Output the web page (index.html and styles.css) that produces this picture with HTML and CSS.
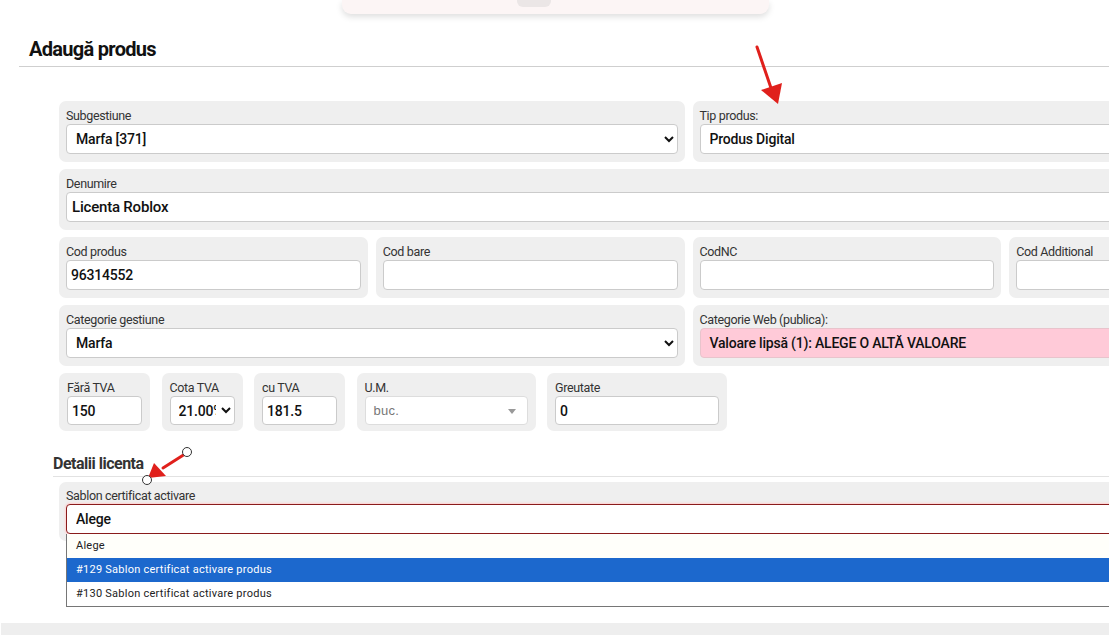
FILE: index.html
```html
<!DOCTYPE html>
<html lang="ro">
<head>
    <meta charset="UTF-8">
    <meta name="viewport" content="width=device-width, initial-scale=1.0">
    <title>Adaugă produs</title>
    <link rel="stylesheet" href="styles.css">
</head>
<body>

<div class="top-menu"><span class="top-tab"></span></div>

<div class="page">
    <h1 class="page-title">Adaugă produs</h1>

    <div class="form">
        <div class="row cols-2">
            <div class="form-group">
                <label for="subgestiune">Subgestiune</label>
                <select id="subgestiune"><option>Marfa [371]</option></select>
            </div>
            <div class="form-group">
                <label for="tip">Tip produs:</label>
                <select id="tip" class="no-arrow"><option>Produs Digital</option></select>
            </div>
        </div>

        <div class="row">
            <div class="form-group">
                <label for="denumire">Denumire</label>
                <input type="text" id="denumire" class="big" value="Licenta Roblox">
            </div>
        </div>

        <div class="row cols-4">
            <div class="form-group">
                <label for="cod">Cod produs</label>
                <input type="text" id="cod" value="96314552">
            </div>
            <div class="form-group">
                <label for="codbare">Cod bare</label>
                <input type="text" id="codbare">
            </div>
            <div class="form-group">
                <label for="codnc">CodNC</label>
                <input type="text" id="codnc">
            </div>
            <div class="form-group">
                <label for="codadd">Cod Additional</label>
                <input type="text" id="codadd">
            </div>
        </div>

        <div class="row cols-2">
            <div class="form-group">
                <label for="catgest">Categorie gestiune</label>
                <select id="catgest"><option>Marfa</option></select>
            </div>
            <div class="form-group">
                <label>Categorie Web (publica):</label>
                <div class="missing-value">Valoare lipsă (1): ALEGE O ALTĂ VALOARE</div>
            </div>
        </div>

        <div class="row small-row">
            <div class="form-group w-91">
                <label for="faratva">Fără TVA</label>
                <input type="text" id="faratva" value="150">
            </div>
            <div class="form-group w-81">
                <label for="cota">Cota TVA</label>
                <select id="cota"><option>21.00%</option></select>
            </div>
            <div class="form-group w-91">
                <label for="cutva">cu TVA</label>
                <input type="text" id="cutva" value="181.5">
            </div>
            <div class="form-group w-179">
                <label>U.M.</label>
                <div class="select2">buc.<span class="caret"></span></div>
            </div>
            <div class="form-group w-180">
                <label for="greutate">Greutate</label>
                <input type="text" id="greutate" value="0">
            </div>
        </div>
    </div>

    <h2 class="section-title">Detalii licenta</h2>

    <div class="form">
        <div class="row">
            <div class="form-group">
                <label for="sablon">Sablon certificat activare</label>
                <div class="select-wrap">
                    <select id="sablon" class="invalid no-arrow"><option>Alege</option></select>
                    <ul class="dropdown">
                        <li>Alege</li>
                        <li class="active">#129 Sablon certificat activare produs</li>
                        <li>#130 Sablon certificat activare produs</li>
                    </ul>
                </div>
            </div>
        </div>
    </div>
</div>

<div class="footer-strip"></div>

<svg class="annotations" width="1109" height="635" viewBox="0 0 1109 635">
    <line x1="757" y1="47" x2="771" y2="88" stroke="#e0201c" stroke-width="3" stroke-linecap="round"/>
    <polygon points="778,104 761,90 782,83" fill="#e0201c"/>
    <line x1="185" y1="454" x2="163" y2="468" stroke="#e0201c" stroke-width="3" stroke-linecap="round"/>
    <polygon points="148,478 154,463 166,476" fill="#e0201c"/>
    <circle cx="187" cy="452" r="4.5" fill="#fff" stroke="#333" stroke-width="1"/>
    <circle cx="147" cy="480" r="4.5" fill="#fff" stroke="#333" stroke-width="1"/>
</svg>

</body>
</html>
```

FILE: styles.css
```css
html, body {
    margin: 0;
    padding: 0;
    overflow: hidden;
    background-color: #fff;
}
body {
    font-family: Roboto, "Liberation Sans", sans-serif;
    color: #222;
    width: 1109px;
    height: 635px;
    position: relative;
}
.top-menu {
    position: absolute;
    top: 0;
    left: 342px;
    width: 427px;
    height: 14px;
    background-color: #fcf5f5;
    border-radius: 0 0 9px 9px;
    box-shadow: 0 3px 6px rgba(0, 0, 0, 0.13);
}
.top-tab {
    position: absolute;
    left: 175px;
    top: 0;
    width: 34px;
    height: 7px;
    background-color: #ebe6e6;
    border-radius: 0 0 6px 6px;
}
.page {
    padding-top: 36px;
}
.page-title {
    margin: 0 0 0 19px;
    padding: 0 10px 4px;
    font-size: 20px;
    line-height: 26px;
    font-weight: bold;
    letter-spacing: -0.7px;
    color: #111;
    border-bottom: 1px solid #cfcfcf;
}
.form {
    margin-left: 59px;
    width: 1259px;
}
.page-title + .form {
    margin-top: 34px;
}
.row {
    display: grid;
    grid-template-columns: 1fr;
    gap: 8px;
    margin-bottom: 7px;
}
.row.cols-2 {
    grid-template-columns: 1fr 1fr;
}
.row.cols-4 {
    grid-template-columns: repeat(4, 1fr);
}
.row.small-row {
    display: flex;
    gap: 11.5px;
}
.w-91 { width: 91px; }
.w-81 { width: 81px; }
.w-179 { width: 179px; }
.w-180 { width: 180px; }
.form-group {
    background-color: #efefef;
    border-radius: 7px;
    padding: 6px 7px 8px;
    box-sizing: border-box;
}
.form-group label {
    display: block;
    font-size: 12.5px;
    line-height: 17px;
    letter-spacing: -0.35px;
    color: #333;
}
.form-group input,
.form-group select,
.missing-value,
.select2 {
    display: block;
    width: 100%;
    height: 30px;
    box-sizing: border-box;
    border: 1px solid #cbcbcb;
    border-radius: 4px;
    background-color: #fff;
    font-family: Roboto, "Liberation Sans", sans-serif;
    font-size: 14px;
    font-weight: 500;
    letter-spacing: -0.2px;
    color: #111;
}
.form-group input {
    padding: 0 4px;
}
.form-group input.big {
    font-size: 15px;
    padding: 0 5px;
}
.form-group select {
    padding: 0 5px;
}
.form-group select.no-arrow {
    appearance: none;
    padding: 0 9px;
}
.small-row .form-group {
    padding: 6px 8px 6px;
}
.small-row input,
.small-row select {
    height: 29px;
}
.small-row select {
    padding: 0 2px 0 4px;
}
.missing-value {
    background-color: #ffcad8;
    border-color: #e8c4cc;
    padding: 0 9px;
    line-height: 28px;
    white-space: nowrap;
    overflow: hidden;
}
.select2 {
    position: relative;
    height: 29px;
    border-color: #ddd;
    font-family: "Liberation Sans", Arial, sans-serif;
    font-weight: normal;
    font-size: 13px;
    letter-spacing: 0.3px;
    color: #777;
    padding: 0 8px;
    line-height: 27px;
}
.select2 .caret {
    position: absolute;
    right: 11px;
    top: 12px;
    border-left: 4px solid transparent;
    border-right: 4px solid transparent;
    border-top: 5px solid #999;
}
.section-title {
    margin: 23px 0 0 53px;
    padding-bottom: 2px;
    font-size: 16px;
    line-height: 20px;
    font-weight: bold;
    letter-spacing: -0.5px;
    color: #333;
    border-bottom: 1px solid #e2e2e2;
}
.section-title + .form {
    margin-top: 5px;
}
.section-title + .form .form-group {
    padding-top: 5px;
    padding-bottom: 7px;
}
.select-wrap {
    position: relative;
}
.form-group select.invalid {
    border-color: #8a1c1c;
    box-shadow: 0 0 2px 1px #ffd0d0;
}
.dropdown {
    position: absolute;
    top: 30px;
    left: 0;
    right: 0;
    margin: 0;
    padding: 0;
    list-style: none;
    background-color: #fff;
    border: 1px solid #767676;
    border-top: none;
    font-family: Roboto, "Liberation Sans", sans-serif;
    font-size: 11px;
    letter-spacing: 0.25px;
    color: #222;
    z-index: 5;
}
.dropdown li {
    height: 24px;
    line-height: 24px;
    padding: 0 9px;
}
.dropdown li:first-child {
    background-color: #fffffa;
}
.dropdown li.active {
    background-color: #1c68cd;
    color: #fff;
}
.footer-strip {
    position: absolute;
    left: 1px;
    right: 0;
    top: 623px;
    height: 12px;
    background-color: #eee;
}
.annotations {
    position: absolute;
    top: 0;
    left: 0;
    pointer-events: none;
    z-index: 10;
}
```
